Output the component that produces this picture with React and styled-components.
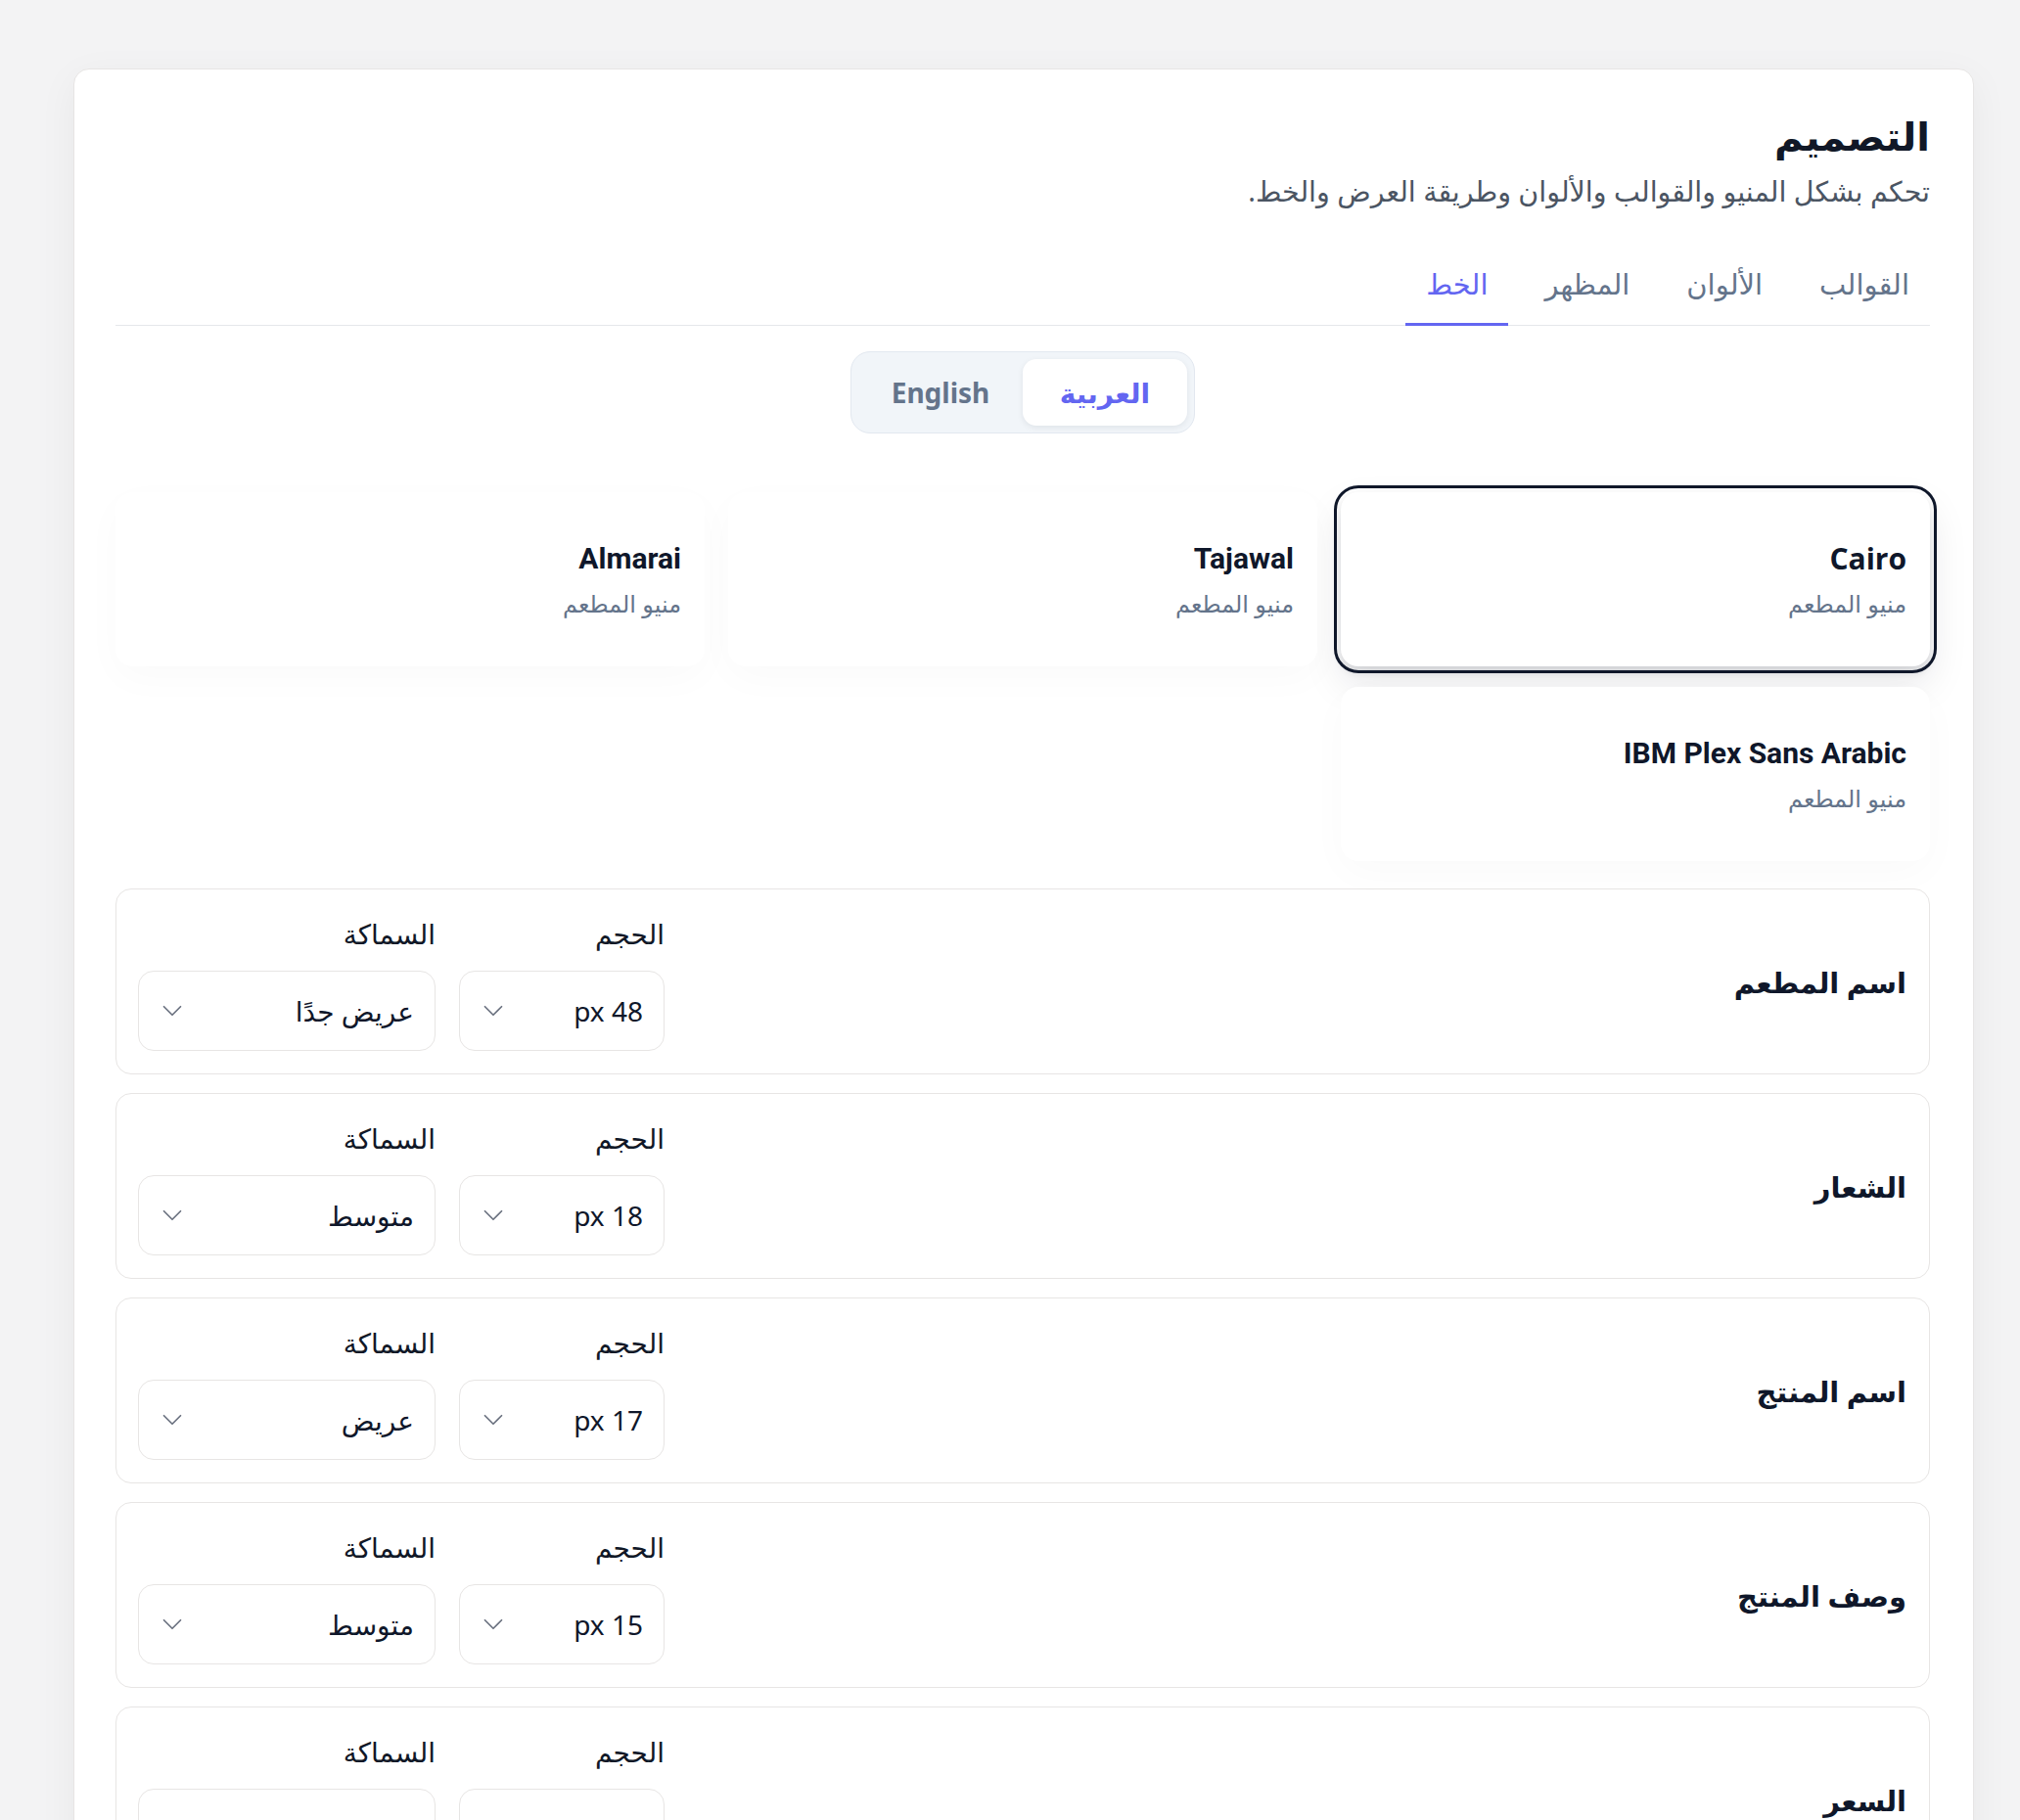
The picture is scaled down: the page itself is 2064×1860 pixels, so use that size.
import React, { useState } from 'react';
import styled, { createGlobalStyle } from 'styled-components';
import { ChevronDown } from 'lucide-react';

const GlobalStyle = createGlobalStyle`
  body {
    margin: 0;
    background: #f3f3f4;
    font-family: "Noto Sans", "DejaVu Sans", sans-serif;
  }
`;

const Page = styled.div`
  padding: 70px 47px 0 75px;
`;

const Panel = styled.section`
  direction: rtl;
  background: #fff;
  border: 1px solid #e7e5e4;
  border-radius: 16px;
  box-shadow: 0 10px 40px rgba(0, 0, 0, 0.05);
  padding: 43px 44px 60px 42px;
`;

const Title = styled.h1`
  margin: 0;
  font-size: 40px;
  line-height: 50px;
  font-weight: 700;
  color: #111827;
`;

const Subtitle = styled.p`
  margin: 11px 0 0;
  font-size: 28.5px;
  line-height: 40px;
  color: #4b5563;
`;

const Tabs = styled.div`
  display: flex;
  gap: 16px;
  margin-top: 39px;
  border-bottom: 1px solid #e5e7eb;
`;

const Tab = styled.button`
  border: none;
  background: none;
  font-family: inherit;
  font-size: 29px;
  line-height: 40px;
  padding: 16px 21px 20px;
  margin-bottom: -1px;
  color: ${(p) => (p.$active ? '#6366f1' : '#64748b')};
  border-bottom: 3px solid ${(p) => (p.$active ? '#6366f1' : 'transparent')};
  cursor: pointer;
`;

const SegmentWrap = styled.div`
  display: flex;
  justify-content: center;
  margin-top: 26px;
`;

const Segment = styled.div`
  display: flex;
  padding: 7px;
  background: #f1f5f9;
  border: 1px solid #e2e8f0;
  border-radius: 20px;
`;

const SegmentButton = styled.button`
  width: 168px;
  height: 68px;
  border: none;
  border-radius: 14px;
  font-family: inherit;
  font-size: 28px;
  font-weight: 700;
  background: ${(p) => (p.$active ? '#fff' : 'transparent')};
  color: ${(p) => (p.$active ? '#6366f1' : '#64748b')};
  box-shadow: ${(p) => (p.$active ? '0 2px 6px rgba(15, 23, 42, 0.08)' : 'none')};
  cursor: pointer;
`;

const FontGrid = styled.div`
  display: grid;
  grid-template-columns: repeat(3, 1fr);
  gap: 21px 24px;
  margin-top: 60px;
`;

const FontCard = styled.div`
  height: 178px;
  box-sizing: border-box;
  padding: 0 24px;
  display: flex;
  flex-direction: column;
  justify-content: center;
  align-items: flex-start;
  gap: 10px;
  background: #fff;
  border-radius: 18px;
  box-shadow: ${(p) =>
    p.$active
      ? '0 6px 8px rgba(15, 23, 42, 0.12), 0 18px 40px rgba(15, 23, 42, 0.1)'
      : '0 12px 40px rgba(15, 23, 42, 0.025)'};
  outline: ${(p) => (p.$active ? '3px solid #0f172a' : 'none')};
  outline-offset: 4px;
  cursor: pointer;
`;

const FontName = styled.div`
  font-family: ${(p) => p.$family};
  font-size: 30px;
  line-height: 40px;
  font-weight: 700;
  color: #0f172a;
`;

const FontSample = styled.div`
  font-size: 24px;
  line-height: 32px;
  color: #64748b;
`;

const Rows = styled.div`
  display: flex;
  flex-direction: column;
  gap: 19px;
  margin-top: 28px;
`;

const Row = styled.div`
  display: flex;
  align-items: center;
  justify-content: space-between;
  border: 1px solid #e7e5e4;
  border-radius: 16px;
  padding: 23px 23px 23px 22px;
`;

const RowTitle = styled.div`
  font-size: 29px;
  font-weight: 700;
  color: #0f172a;
`;

const Controls = styled.div`
  display: flex;
  gap: 24px;
`;

const Field = styled.div`
  display: flex;
  flex-direction: column;
  gap: 16px;
  width: ${(p) => p.$width}px;
`;

const FieldLabel = styled.div`
  font-size: 28px;
  line-height: 44px;
  color: #111827;
`;

const Select = styled.div`
  height: 82px;
  box-sizing: border-box;
  display: flex;
  align-items: center;
  justify-content: space-between;
  padding: 0 21px 0 17px;
  border: 1px solid #e7e5e4;
  border-radius: 16px;
  font-size: 28px;
  color: #0f172a;
  svg {
    color: #6b7280;
  }
`;

const fonts = [
  { name: 'Cairo', family: '"Open Sans", sans-serif' },
  { name: 'Tajawal', family: '"Liberation Sans Narrow", Roboto, sans-serif' },
  { name: 'Almarai', family: '"Liberation Sans Narrow", Roboto, sans-serif' },
  { name: 'IBM Plex Sans Arabic', family: 'Roboto, sans-serif' },
];

const rows = [
  { title: 'اسم المطعم', size: '48 px', weight: 'عريض جدًا' },
  { title: 'الشعار', size: '18 px', weight: 'متوسط' },
  { title: 'اسم المنتج', size: '17 px', weight: 'عريض' },
  { title: 'وصف المنتج', size: '15 px', weight: 'متوسط' },
  { title: 'السعر', size: '20 px', weight: 'عريض' },
];

const tabs = ['القوالب', 'الألوان', 'المظهر', 'الخط'];

const App = () => {
  const [tab, setTab] = useState('الخط');
  const [lang, setLang] = useState('ar');
  const [font, setFont] = useState('Cairo');

  return (
    <>
      <GlobalStyle />
      <Page>
        <Panel>
          <Title>التصميم</Title>
          <Subtitle>تحكم بشكل المنيو والقوالب والألوان وطريقة العرض والخط.</Subtitle>

          <Tabs>
            {tabs.map((t) => (
              <Tab key={t} $active={tab === t} onClick={() => setTab(t)}>
                {t}
              </Tab>
            ))}
          </Tabs>

          <SegmentWrap>
            <Segment>
              <SegmentButton $active={lang === 'ar'} onClick={() => setLang('ar')}>
                العربية
              </SegmentButton>
              <SegmentButton $active={lang === 'en'} onClick={() => setLang('en')}>
                English
              </SegmentButton>
            </Segment>
          </SegmentWrap>

          <FontGrid>
            {fonts.map((f) => (
              <FontCard key={f.name} $active={font === f.name} onClick={() => setFont(f.name)}>
                <FontName $family={f.family}>{f.name}</FontName>
                <FontSample>منيو المطعم</FontSample>
              </FontCard>
            ))}
          </FontGrid>

          <Rows>
            {rows.map((r) => (
              <Row key={r.title}>
                <RowTitle>{r.title}</RowTitle>
                <Controls>
                  <Field $width={210}>
                    <FieldLabel>الحجم</FieldLabel>
                    <Select>
                      <span>{r.size}</span>
                      <ChevronDown size={34} strokeWidth={1.2} />
                    </Select>
                  </Field>
                  <Field $width={304}>
                    <FieldLabel>السماكة</FieldLabel>
                    <Select>
                      <span>{r.weight}</span>
                      <ChevronDown size={34} strokeWidth={1.2} />
                    </Select>
                  </Field>
                </Controls>
              </Row>
            ))}
          </Rows>
        </Panel>
      </Page>
    </>
  );
};

export default App;
